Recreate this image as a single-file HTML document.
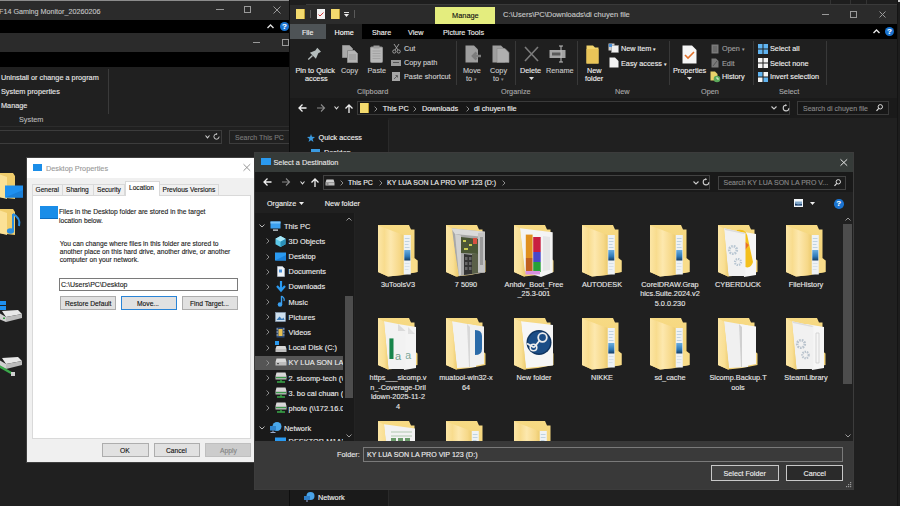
<!DOCTYPE html>
<html><head><meta charset="utf-8">
<style>
*{margin:0;padding:0;box-sizing:border-box}
html,body{width:900px;height:506px;overflow:hidden;background:#202020;font-family:"Liberation Sans",sans-serif;position:relative}
.a{position:absolute}
.gl{color:#ececec;line-height:10px}
.t{position:absolute;white-space:nowrap;font-size:7.3px;line-height:10px;color:#e8e8e8;-webkit-text-stroke:0.12px currentColor;margin-top:0.5px}
svg{position:absolute;overflow:visible}
</style></head><body>

<!-- ===== Window A (left, background) ===== -->
<div class="a" style="left:0;top:0;width:290px;height:506px;background:#202020"></div>
<div class="a" style="left:0;top:0;width:290px;height:1px;background:#8c8c8c"></div>
<div class="a" style="left:0;top:1px;width:290px;height:19px;background:#2b2b2b"></div>
<div class="t" style="left:-1px;top:6px;color:#c4c4c4;font-size:7.2px">F14 Gaming Monitor_20260206</div>
<div class="a" style="left:216px;top:9px;width:8px;height:1px;background:#9a9a9a"></div>
<div class="a" style="left:244px;top:6px;width:7px;height:7px;border:1px solid #9a9a9a"></div>
<svg style="left:273px;top:6px" width="8" height="8"><path d="M0.5 0.5L7.5 7.5M7.5 0.5L0.5 7.5" stroke="#9a9a9a" stroke-width="1"/></svg>
<div class="a" style="left:0;top:20px;width:290px;height:13px;background:#000"></div>
<svg style="left:267px;top:24px" width="7" height="5"><path d="M0.5 4L3.5 1L6.5 4" stroke="#e0e0e0" stroke-width="1.4" fill="none"/></svg>
<div class="a" style="left:280px;top:22px;width:9px;height:9px;border-radius:50%;background:#1a73d0"></div>
<div class="t" style="left:282px;top:21px;font-size:8px;font-weight:bold;color:#fff">?</div>
<div class="a" style="left:0;top:33px;width:290px;height:19px;background:#2b2b2b"></div>
<div class="a" style="left:253px;top:42px;width:7px;height:1px;background:#9a9a9a"></div>
<div class="a" style="left:282px;top:39px;width:7px;height:7px;border:1px solid #9a9a9a"></div>
<div class="a" style="left:0;top:52px;width:290px;height:15px;background:#000"></div>
<div class="a" style="left:0;top:67px;width:290px;height:59px;background:#202020"></div>
<div class="a" style="left:108px;top:69px;width:1px;height:45px;background:#3a3a3a"></div>
<div class="t" style="left:1px;top:72.5px">Uninstall or change a program</div>
<div class="t" style="left:1px;top:86.5px">System properties</div>
<div class="t" style="left:1px;top:100.5px">Manage</div>
<div class="t" style="left:19px;top:114.5px;color:#b8b8b8">System</div>
<div class="a" style="left:0;top:126px;width:290px;height:1px;background:#2c2c2c"></div>
<div class="a" style="left:-2px;top:130px;width:224px;height:14px;border:1px solid #3c3c3c"></div>
<svg style="left:205px;top:135px" width="5" height="4"><path d="M0.5 0.5L2.5 2.8L4.5 0.5" stroke="#ccc" stroke-width="1.1" fill="none"/></svg>
<svg style="left:213px;top:133px" width="7" height="7"><path d="M3.5 1A2.6 2.6 0 1 0 6.1 3.6" stroke="#ccc" stroke-width="1" fill="none"/><path d="M3 0L4.6 1L3 2Z" fill="#ccc"/></svg>
<div class="a" style="left:229px;top:130px;width:62px;height:14px;border:1px solid #3c3c3c"></div>
<div class="t" style="left:235px;top:132px;color:#7a7a7a;font-size:7px">Search This PC</div>
<!-- left icons (window A content) -->
<svg style="left:-1px;top:173px" width="26" height="28"><path d="M0 0H14L16 3V26L0 24Z" fill="#f0cd6c"/><path d="M0 1L8 4V26L0 24Z" fill="#fbe196"/><rect x="6" y="12.5" width="18" height="12" fill="#1e90f0"/><path d="M6 24.5L24 17V24.5Z" fill="#1a7fd8"/></svg>
<svg style="left:-1px;top:209px" width="24" height="28"><path d="M0 0H14L16 3V26L0 24Z" fill="#f0cd6c"/><path d="M0 1L8 4V26L0 24Z" fill="#fbe196"/><path d="M14 5V21" stroke="#2a8ee0" stroke-width="2"/><ellipse cx="11.5" cy="22" rx="3.6" ry="2.8" fill="#2a8ee0"/><path d="M14 5Q22 9 20 17" stroke="#2a8ee0" stroke-width="2" fill="none"/></svg>
<svg style="left:-1px;top:301px" width="26" height="24"><rect x="0" y="0" width="7" height="4" fill="#1e90f0"/><rect x="0" y="5" width="7" height="4" fill="#1e90f0"/><path d="M3 10L19 9L23 13L7 16Z" fill="#e8e8e8"/><path d="M7 16L23 13V17L7 21Z" fill="#bcbcbc"/><path d="M0 12L7 16V21L0 18Z" fill="#d0d0d0"/><rect x="4" y="16.5" width="2" height="1.5" fill="#3aa04a"/></svg>
<svg style="left:-1px;top:356px" width="26" height="22"><path d="M3 2L19 1L23 5L7 8Z" fill="#e8e8e8"/><path d="M7 8L23 5V9L7 13Z" fill="#bcbcbc"/><path d="M0 4L7 8V13L0 10Z" fill="#d0d0d0"/><path d="M0 10L14 18" stroke="#3aa84a" stroke-width="2.5"/><rect x="12" y="16" width="4" height="4" fill="#cfcfcf"/></svg>


<!-- ===== Window B (explorer) ===== -->
<div class="a" style="left:290px;top:0;width:607px;height:506px;background:#202020"></div>
<div class="a" style="left:289px;top:0;width:1px;height:506px;background:#0e0e0e"></div>
<div class="a" style="left:897px;top:0;width:3px;height:506px;background:#1d1d1d"></div>
<div class="a" style="left:897px;top:0;width:1px;height:506px;background:#141414"></div>
<div class="a" style="left:898px;top:0;width:2px;height:2px;background:#cfcfcf"></div>
<div class="a" style="left:290px;top:0;width:607px;height:5px;background:#1e1e1e"></div>
<div class="a" style="left:306px;top:4px;width:591px;height:1px;background:#3a3a3a"></div>
<div class="a" style="left:830px;top:0;width:1px;height:4px;background:#333"></div>
<div class="a" style="left:850px;top:0;width:1px;height:4px;background:#333"></div>
<div class="a" style="left:866px;top:0;width:1px;height:4px;background:#333"></div>
<div class="a" style="left:290px;top:5px;width:607px;height:19px;background:#2b2b2b"></div>
<!-- QAT -->
<div class="a" style="left:296px;top:9px;width:9px;height:10px;background:#f3da6e;border-right:1px solid #b89a30"></div>
<div class="a" style="left:310px;top:10px;width:1px;height:8px;background:#5a5a5a"></div>
<div class="a" style="left:317px;top:9px;width:8px;height:10px;background:#f4f4f4"></div>
<svg style="left:318px;top:12px" width="6" height="5"><path d="M0.5 2.5L2 4L5.5 0.5" stroke="#d23a3a" stroke-width="1" fill="none"/></svg>
<div class="a" style="left:331px;top:9px;width:9px;height:10px;background:#f3da6e;border-right:1px solid #b89a30"></div>
<div class="a" style="left:344px;top:12px;width:5px;height:1px;background:#ddd"></div>
<svg style="left:344px;top:14px" width="5" height="3"><path d="M0 0L5 0L2.5 3Z" fill="#eee"/></svg>
<div class="a" style="left:354px;top:10px;width:1px;height:8px;background:#5a5a5a"></div>
<div class="a" style="left:435px;top:7px;width:60px;height:17px;background:#e4ed7e"></div>
<div class="t" style="left:452px;top:10.5px;color:#111;font-size:7.4px">Manage</div>
<div class="t" style="left:503px;top:9.5px;color:#c8c8c8;font-size:7.5px">C:\Users\PC\Downloads\di chuyen file</div>
<div class="a" style="left:822px;top:14px;width:7px;height:1px;background:#9a9a9a"></div>
<div class="a" style="left:850px;top:11px;width:7px;height:7px;border:1px solid #9a9a9a"></div>
<svg style="left:879px;top:11px" width="7" height="7"><path d="M0.5 0.5L6.5 6.5M6.5 0.5L0.5 6.5" stroke="#9a9a9a" stroke-width="1"/></svg>
<!-- tabs -->
<div class="a" style="left:290px;top:24px;width:607px;height:15px;background:#000"></div>
<div class="a" style="left:290px;top:24px;width:36px;height:15px;background:#4e5356"></div>
<div class="t" style="left:302px;top:27px;color:#f2f2f2;font-size:7px">File</div>
<div class="a" style="left:326px;top:24px;width:36px;height:15px;background:#1f1f1f"></div>
<div class="t" style="left:334.5px;top:27px;color:#fff;font-size:7.2px">Home</div>
<div class="t" style="left:372px;top:27px;color:#f0f0f0;font-size:7.2px">Share</div>
<div class="t" style="left:408px;top:27px;color:#f0f0f0;font-size:7.2px">View</div>
<div class="t" style="left:443px;top:27px;color:#f0f0f0;font-size:7.2px">Picture Tools</div>
<svg style="left:873px;top:29px" width="7" height="5"><path d="M0.5 4L3.5 1L6.5 4" stroke="#e8e8e8" stroke-width="1.4" fill="none"/></svg>
<div class="a" style="left:885px;top:27px;width:9px;height:9px;border-radius:50%;background:#1a73d0"></div>
<div class="t" style="left:887px;top:26.5px;font-size:8px;font-weight:bold;color:#fff">?</div>
<!-- ribbon -->
<div class="a" style="left:290px;top:39px;width:607px;height:59px;background:#1f1f1f"></div>
<div class="a" style="left:290px;top:98px;width:607px;height:1px;background:#262626"></div>
<!-- Clipboard group -->
<svg style="left:304px;top:42px" width="20" height="20"><path d="M4.3 17.6L8.5 13.5" stroke="#b4bcbc" stroke-width="1.4"/><path d="M13.3 5.7L17 9.8L14.3 11.2L11.9 16.7L5.9 10.7L11.3 8.4Z" fill="#b4bcbc"/></svg>
<div class="t" style="left:295.5px;top:65px;color:#f0f0f0">Pin to Quick</div>
<div class="t" style="left:305px;top:73.5px;color:#f0f0f0">access</div>
<svg style="left:342px;top:45px" width="16" height="18"><path d="M0.5 0.5H7.5L10.5 3.5V12.5H0.5Z" fill="#a9a9a9" stroke="#8a8a8a" stroke-width="1"/><path d="M5.5 5.5H12.5L15.5 8.5V17.5H5.5Z" fill="#b4b4b4" stroke="#8a8a8a" stroke-width="1"/><path d="M7 10H14M7 12H14M7 14H14" stroke="#8e8e8e" stroke-width="0.8"/></svg>
<div class="t" style="left:341px;top:65px;color:#c8c8c8">Copy</div>
<svg style="left:370px;top:45px" width="13" height="18"><rect x="0.5" y="2" width="12" height="15.5" rx="1" fill="#b8b8b8" stroke="#8e8e8e"/><rect x="3.5" y="0.5" width="6" height="3" fill="#9c9c9c"/><path d="M2.5 6H10.5M2.5 8.5H10.5M2.5 11H10.5M2.5 13.5H10.5" stroke="#999" stroke-width="0.7"/></svg>
<div class="t" style="left:367.5px;top:65px;color:#c8c8c8">Paste</div>
<svg style="left:392px;top:44px" width="9" height="10"><path d="M2 0L6 6M7 0L3 6" stroke="#a8a8a8" stroke-width="0.9"/><circle cx="2.3" cy="7.5" r="1.6" stroke="#a8a8a8" stroke-width="0.9" fill="none"/><circle cx="6.7" cy="7.5" r="1.6" stroke="#a8a8a8" stroke-width="0.9" fill="none"/></svg>
<div class="t" style="left:404px;top:43.8px;color:#d0d0d0">Cut</div>
<div class="a" style="left:391px;top:59.5px;width:10px;height:6.5px;background:#9c9c9c"></div>
<div class="a" style="left:393px;top:62px;width:6px;height:1px;background:#555"></div>
<div class="t" style="left:404px;top:57.8px;color:#d0d0d0">Copy path</div>
<div class="a" style="left:392px;top:72px;width:7.5px;height:9px;background:#a6a6a6"></div>
<svg style="left:393px;top:74px" width="6" height="6"><path d="M1 5L4 2M2.5 1.5H4.5V3.5" stroke="#555" stroke-width="0.9" fill="none"/></svg>
<div class="t" style="left:404px;top:71.6px;color:#d0d0d0">Paste shortcut</div>
<div class="t" style="left:357px;top:86.5px;color:#a8a8a8">Clipboard</div>
<div class="a" style="left:456px;top:41px;width:1px;height:44px;background:#383838"></div>
<!-- Organize group -->
<svg style="left:465px;top:45px" width="17" height="19"><path d="M0.5 0.5H9L13 4.5V17.5H0.5Z" fill="#9e9e9e"/><path d="M16 11H9M11.5 7.5L8 11L11.5 14.5" stroke="#7c7c7c" stroke-width="2.6" fill="none"/></svg>
<div class="t" style="left:463px;top:65.5px;color:#c8c8c8">Move</div>
<div class="t" style="left:466px;top:73.5px;color:#c8c8c8">to <span style="font-size:5px;color:#888">&#9662;</span></div>
<svg style="left:492px;top:45px" width="18" height="19"><path d="M0.5 0.5H9L13 4.5V17.5H0.5Z" fill="#9e9e9e"/><path d="M5 3.5H13L17 7.5V17.5H5Z" fill="#b0b0b0" stroke="#8a8a8a" stroke-width="0.6"/></svg>
<div class="t" style="left:490px;top:65.5px;color:#c8c8c8">Copy</div>
<div class="t" style="left:493px;top:73.5px;color:#c8c8c8">to <span style="font-size:5px;color:#888">&#9662;</span></div>
<div class="a" style="left:515px;top:41px;width:1px;height:44px;background:#383838"></div>
<svg style="left:524px;top:46px" width="15" height="16"><path d="M1 1L14 15M14 1L1 15" stroke="#7b7b7b" stroke-width="1.6"/></svg>
<div class="t" style="left:520px;top:65.5px;color:#eaeaea">Delete</div>
<svg style="left:529px;top:77px" width="5" height="3"><path d="M0 0L5 0L2.5 3Z" fill="#ddd"/></svg>
<svg style="left:549px;top:45px" width="19" height="18"><rect x="0.5" y="5" width="16" height="8" fill="#a4a4a4"/><rect x="3" y="7.5" width="9" height="3" fill="#5a5a5a"/><path d="M12 1V17M10 1H14M10 17H14" stroke="#c0c0c0" stroke-width="1"/></svg>
<div class="t" style="left:546px;top:65.5px;color:#c8c8c8">Rename</div>
<div class="t" style="left:501px;top:86.5px;color:#a8a8a8">Organize</div>
<div class="a" style="left:577px;top:41px;width:1px;height:44px;background:#383838"></div>
<!-- New group -->
<svg style="left:586px;top:45px" width="13" height="19"><path d="M0.5 0.5H7L9 2.5H12.5V18.5H0.5Z" fill="#f2d46c"/><path d="M0.5 4H12.5V18.5H0.5Z" fill="#e9c458"/></svg>
<div class="t" style="left:587px;top:65.5px;color:#f0f0f0">New</div>
<div class="t" style="left:585px;top:73.7px;color:#f0f0f0">folder</div>
<svg style="left:608px;top:43px" width="12" height="10"><rect x="0.5" y="0.5" width="6" height="7" fill="#cfcfcf"/><rect x="3.5" y="2.5" width="7" height="7" fill="#f0f0f0" stroke="#9a9a9a" stroke-width="0.6"/><rect x="1" y="1" width="3" height="3" fill="#4a90d9"/></svg>
<div class="t" style="left:621px;top:43.9px;color:#f0f0f0">New item <span style="font-size:5px">&#9662;</span></div>
<svg style="left:609px;top:57px" width="10" height="11"><path d="M0.5 0.5H6L9.5 4V10.5H0.5Z" fill="#f2f2f2"/></svg>
<div class="t" style="left:621px;top:58px;color:#f0f0f0">Easy access <span style="font-size:5px">&#9662;</span></div>
<div class="t" style="left:615px;top:86.5px;color:#a8a8a8">New</div>
<div class="a" style="left:669px;top:41px;width:1px;height:44px;background:#383838"></div>
<!-- Open group -->
<svg style="left:682px;top:45px" width="15" height="19"><path d="M0.5 0.5H10L14.5 5V18.5H0.5Z" fill="#f6f6f6"/><path d="M3 10L6 13L12 7" stroke="#e0702a" stroke-width="1.6" fill="none"/></svg>
<div class="t" style="left:673px;top:65.5px;color:#f0f0f0">Properties</div>
<svg style="left:687px;top:77px" width="5" height="3"><path d="M0 0L5 0L2.5 3Z" fill="#ddd"/></svg>
<svg style="left:711px;top:44px" width="8" height="10"><path d="M0.5 0.5H7.5V9.5H0.5Z" fill="#7a7a7a"/><path d="M2 3H6M2 5H6M2 7H6" stroke="#555" stroke-width="0.8"/></svg>
<div class="t" style="left:722px;top:43.9px;color:#a0a0a0">Open <span style="font-size:5px">&#9662;</span></div>
<svg style="left:711px;top:58px" width="8" height="10"><path d="M0.5 0.5H5L7.5 3V9.5H0.5Z" fill="#7a7a7a"/><path d="M2 8L6 3" stroke="#555" stroke-width="1"/></svg>
<div class="t" style="left:722px;top:58px;color:#a0a0a0">Edit</div>
<svg style="left:710px;top:71px" width="11" height="12"><path d="M0.5 0.5H5L7.5 3V9.5H0.5Z" fill="#e8d26a"/><circle cx="7" cy="8" r="3.3" fill="#5aa85a"/><path d="M7 6V8H9" stroke="#fff" stroke-width="0.8" fill="none"/></svg>
<div class="t" style="left:722px;top:71.7px;color:#f0f0f0">History</div>
<div class="t" style="left:701px;top:86.5px;color:#a8a8a8">Open</div>
<div class="a" style="left:753px;top:41px;width:1px;height:44px;background:#383838"></div>
<!-- Select group -->
<svg style="left:758px;top:44px" width="10" height="10"><rect x="0" y="0" width="4.5" height="4.5" fill="#5fb3f0"/><rect x="5.5" y="0" width="4.5" height="4.5" fill="#5fb3f0"/><rect x="0" y="5.5" width="4.5" height="4.5" fill="#5fb3f0"/><rect x="5.5" y="5.5" width="4.5" height="4.5" fill="#5fb3f0"/></svg>
<div class="t" style="left:770px;top:43.7px;color:#f0f0f0">Select all</div>
<svg style="left:758px;top:58px" width="10" height="10"><rect x="0" y="0" width="4.5" height="4.5" fill="#f4f4f4"/><rect x="5.5" y="0" width="4.5" height="4.5" fill="#f4f4f4"/><rect x="0" y="5.5" width="4.5" height="4.5" fill="#f4f4f4"/><rect x="5.5" y="5.5" width="4.5" height="4.5" fill="#f4f4f4"/></svg>
<div class="t" style="left:770px;top:58px;color:#f0f0f0">Select none</div>
<svg style="left:758px;top:72px" width="10" height="10"><rect x="0" y="0" width="4.5" height="4.5" fill="#5fb3f0"/><rect x="5.5" y="0" width="4.5" height="4.5" fill="#f4f4f4"/><rect x="0" y="5.5" width="4.5" height="4.5" fill="#f4f4f4"/><rect x="5.5" y="5.5" width="4.5" height="4.5" fill="#5fb3f0"/></svg>
<div class="t" style="left:770px;top:71.7px;color:#f0f0f0">Invert selection</div>
<div class="t" style="left:779px;top:86.5px;color:#a8a8a8">Select</div>
<div class="a" style="left:826px;top:41px;width:1px;height:44px;background:#383838"></div>
<!-- address row -->
<div class="a" style="left:290px;top:98px;width:607px;height:20px;background:#1a1a1a"></div>
<svg style="left:298px;top:104px" width="9" height="8"><path d="M8.5 4H1M4.5 0.5L1 4L4.5 7.5" stroke="#f0f0f0" stroke-width="1.3" fill="none"/></svg>
<svg style="left:317px;top:104px" width="9" height="8"><path d="M0 4H7.5M4 0.5L7.5 4L4 7.5" stroke="#8a8a8a" stroke-width="1.1" fill="none"/></svg>
<svg style="left:334px;top:106px" width="5" height="4"><path d="M0.5 0.5L2.5 2.8L4.5 0.5" stroke="#ddd" stroke-width="1.1" fill="none"/></svg>
<svg style="left:345px;top:104px" width="8" height="9"><path d="M4 9V1.2M0.5 4.5L4 1L7.5 4.5" stroke="#f0f0f0" stroke-width="1.3" fill="none"/></svg>
<div class="a" style="left:357px;top:101px;width:433px;height:14px;border:1px solid #3a3a3a;background:#171717"></div>
<div class="a" style="left:360px;top:103px;width:9px;height:10px;background:#f3da6e;border-right:1px solid #b89a30"></div>
<svg style="left:373.5px;top:105.5px" width="4" height="6"><path d="M0.6 0.6L3 3L0.6 5.4" stroke="#9a9a9a" stroke-width="0.9" fill="none"/></svg>
<div class="t" style="left:382.8px;top:103px;color:#f0f0f0">This PC</div>
<svg style="left:412.5px;top:105.5px" width="4" height="6"><path d="M0.6 0.6L3 3L0.6 5.4" stroke="#9a9a9a" stroke-width="0.9" fill="none"/></svg>
<div class="t" style="left:422px;top:103px;color:#f0f0f0">Downloads</div>
<svg style="left:465.5px;top:105.5px" width="4" height="6"><path d="M0.6 0.6L3 3L0.6 5.4" stroke="#9a9a9a" stroke-width="0.9" fill="none"/></svg>
<div class="t" style="left:474px;top:103px;color:#f0f0f0">di chuyen file</div>
<svg style="left:771px;top:106px" width="6" height="4"><path d="M0.5 0.5L3 3L5.5 0.5" stroke="#ccc" stroke-width="1.1" fill="none"/></svg>
<svg style="left:782px;top:104px" width="8" height="8"><path d="M4 1.3A2.8 2.8 0 1 0 6.8 4.2" stroke="#ccc" stroke-width="1.1" fill="none"/><path d="M3.3 0L5.2 1.3L3.3 2.6Z" fill="#ccc"/></svg>
<div class="a" style="left:797px;top:101px;width:92px;height:14px;border:1px solid #3a3a3a;background:#171717"></div>
<div class="t" style="left:803px;top:103px;color:#8a8a8a;font-size:7px">Search di chuyen file</div>
<svg style="left:876px;top:104px" width="7" height="8"><circle cx="4.3" cy="2.8" r="2.2" stroke="#ddd" stroke-width="1" fill="none"/><path d="M2.8 4.3L0.5 6.8" stroke="#ddd" stroke-width="1.2"/></svg>
<!-- nav pane (behind) -->
<div class="a" style="left:290px;top:118px;width:98px;height:388px;background:#1a1a1a"></div>
<div class="a" style="left:388px;top:120px;width:1px;height:386px;background:#2a2a2a"></div>
<svg style="left:307px;top:134px" width="8" height="8"><path d="M4 0L5 2.8L8 3L5.6 4.9L6.5 8L4 6.2L1.5 8L2.4 4.9L0 3L3 2.8Z" fill="#3a9ae0"/></svg>
<div class="t" style="left:318.6px;top:132.5px;color:#f0f0f0">Quick access</div>
<div class="a" style="left:311px;top:149px;width:9px;height:6px;background:#3a9ae0"></div>
<div class="t" style="left:324px;top:147px;color:#f0f0f0">Desktop</div>
<svg style="left:304px;top:492px" width="11" height="10"><circle cx="6.5" cy="4" r="4" fill="#4aa3e8"/><rect x="0" y="4" width="6" height="4" fill="#2f7fc8"/><path d="M3 8V10" stroke="#9ad" stroke-width="1"/></svg>
<div class="t" style="left:318px;top:492px;color:#f0f0f0">Network</div>


<!-- ===== Desktop Properties dialog ===== -->
<div class="a" style="left:26px;top:157px;width:230px;height:306px;background:#f0f0f0;border:1px solid #3f3f3f"></div>
<div class="a" style="left:27px;top:158px;width:228px;height:20px;background:#fff"></div>
<div class="a" style="left:33px;top:164px;width:9px;height:6.5px;background:#1a8de8"></div>
<div class="t" style="left:46px;top:163px;color:#9a9a9a;font-size:7.3px">Desktop Properties</div>
<svg style="left:243px;top:164px" width="8" height="7"><path d="M0.5 0.2L7.2 6.8M7.2 0.2L0.5 6.8" stroke="#8a8a8a" stroke-width="0.9"/></svg>
<!-- tabs -->
<div class="a" style="left:32px;top:183.5px;width:31px;height:11px;border:1px solid #d9d9d9;border-bottom:none;background:#f0f0f0"></div>
<div class="t" style="left:35.5px;top:184.5px;color:#111;font-size:6.6px">General</div>
<div class="a" style="left:62px;top:183.5px;width:32px;height:11px;border:1px solid #d9d9d9;border-bottom:none;background:#f0f0f0"></div>
<div class="t" style="left:66px;top:184.5px;color:#111;font-size:6.6px">Sharing</div>
<div class="a" style="left:93px;top:183.5px;width:32px;height:11px;border:1px solid #d9d9d9;border-bottom:none;background:#f0f0f0"></div>
<div class="t" style="left:97px;top:184.5px;color:#111;font-size:6.6px">Security</div>
<div class="a" style="left:159px;top:183.5px;width:60px;height:11px;border:1px solid #d9d9d9;border-bottom:none;background:#f0f0f0"></div>
<div class="t" style="left:162.5px;top:184.5px;color:#111;font-size:6.6px">Previous Versions</div>
<div class="a" style="left:31.5px;top:194.5px;width:219.5px;height:244.5px;background:#fff;border:1px solid #d9d9d9"></div>
<div class="a" style="left:124.5px;top:181px;width:35px;height:15px;background:#fff;border:1px solid #d9d9d9;border-bottom:none"></div>
<div class="t" style="left:129px;top:182.5px;color:#111;font-size:6.6px">Location</div>
<!-- panel content -->
<div class="a" style="left:40px;top:206px;width:18px;height:13px;background:#1a8de8;border-bottom:1px solid #0d6cc0"></div>
<div class="t" style="left:59px;top:206px;color:#1a1a1a;font-size:6.7px;line-height:9px">Files in the Desktop folder are stored in the target<br>location below.</div>
<div class="t" style="left:59.7px;top:239.5px;color:#1a1a1a;font-size:6.7px;line-height:8px">You can change where files in this folder are stored to<br>another place on this hard drive, another drive, or another<br>computer on your network.</div>
<div class="a" style="left:59px;top:278px;width:179px;height:12.5px;border:1px solid #7a7a7a;background:#fff"></div>
<div class="t" style="left:61px;top:279.5px;color:#1a1a1a;font-size:7px">C:\Users\PC\Desktop</div>
<div class="a" style="left:60px;top:296px;width:56px;height:13.5px;border:1px solid #adadad;background:#e1e1e1"></div>
<div class="t" style="left:65px;top:298px;color:#111;font-size:6.7px">Restore Default</div>
<div class="a" style="left:121px;top:296px;width:56px;height:13.5px;border:1.5px solid #2a84d6;background:#e1e1e1"></div>
<div class="t" style="left:137px;top:298px;color:#111;font-size:6.7px">Move...</div>
<div class="a" style="left:182px;top:296px;width:56px;height:13.5px;border:1px solid #adadad;background:#e1e1e1"></div>
<div class="t" style="left:190px;top:298px;color:#111;font-size:6.7px">Find Target...</div>
<!-- bottom buttons -->
<div class="a" style="left:102px;top:443px;width:46.5px;height:13.5px;border:1px solid #adadad;background:#e1e1e1"></div>
<div class="t" style="left:120px;top:445px;color:#111;font-size:6.7px">OK</div>
<div class="a" style="left:154px;top:443px;width:46px;height:13.5px;border:1px solid #adadad;background:#e1e1e1"></div>
<div class="t" style="left:166px;top:445px;color:#111;font-size:6.7px">Cancel</div>
<div class="a" style="left:205px;top:443px;width:46px;height:13.5px;border:1px solid #bfbfbf;background:#cccccc"></div>
<div class="t" style="left:220px;top:445px;color:#838383;font-size:6.7px">Apply</div>

<!-- ===== Select a Destination dialog ===== -->
<div class="a" style="left:254px;top:152px;width:600px;height:338px;background:#202020;border:1px solid #3c3c3c"></div>
<div class="a" style="left:255px;top:171px;width:598px;height:21px;background:#191919"></div>
<div class="a" style="left:255px;top:213px;width:100px;height:228px;background:#1a1a1a"></div>
<div class="a" style="left:255px;top:153px;width:598px;height:18.5px;background:#363b39"></div>
<div class="a" style="left:261px;top:158px;width:9.5px;height:6.5px;background:#2a9af0"></div>
<div class="t" style="left:273.5px;top:157px;color:#e6e6e6;font-size:7.3px">Select a Destination</div>
<svg style="left:840px;top:158.5px" width="8" height="7"><path d="M0.5 0.3L7.2 6.7M7.2 0.3L0.5 6.7" stroke="#e8e8e8" stroke-width="1"/></svg>
<!-- nav row -->
<svg style="left:263px;top:178px" width="9" height="8"><path d="M8.5 4H1M4.5 0.5L1 4L4.5 7.5" stroke="#f0f0f0" stroke-width="1.3" fill="none"/></svg>
<svg style="left:282px;top:178px" width="9" height="8"><path d="M0 4H7.5M4 0.5L7.5 4L4 7.5" stroke="#8a8a8a" stroke-width="1.1" fill="none"/></svg>
<svg style="left:299.5px;top:180.5px" width="5" height="4"><path d="M0.5 0.5L2.5 2.8L4.5 0.5" stroke="#ddd" stroke-width="1.1" fill="none"/></svg>
<svg style="left:310.5px;top:178px" width="8" height="9"><path d="M4 9V1.2M0.5 4.5L4 1L7.5 4.5" stroke="#f0f0f0" stroke-width="1.3" fill="none"/></svg>
<div class="a" style="left:322.5px;top:175px;width:387.5px;height:14.5px;border:1px solid #424242;background:#1b1b1b"></div>
<svg style="left:325px;top:179px" width="10" height="7"><path d="M1.5 0.5H8.5L9.5 3.5H0.5Z" fill="#cfcfcf"/><rect x="0.5" y="3.5" width="9" height="3" fill="#bdbdbd"/><rect x="1.5" y="4.5" width="2" height="1" fill="#555"/></svg>
<svg style="left:339.5px;top:180.0px" width="4" height="6"><path d="M0.6 0.6L3 3L0.6 5.4" stroke="#9a9a9a" stroke-width="0.9" fill="none"/></svg>
<div class="t" style="left:348px;top:177.3px;color:#f0f0f0;font-size:7px">This PC</div>
<svg style="left:378.5px;top:180.0px" width="4" height="6"><path d="M0.6 0.6L3 3L0.6 5.4" stroke="#9a9a9a" stroke-width="0.9" fill="none"/></svg>
<div class="t" style="left:387px;top:177.3px;color:#f0f0f0;font-size:7px">KY LUA SON LA PRO VIP 123 (D:)</div>
<svg style="left:501.5px;top:180.0px" width="4" height="6"><path d="M0.6 0.6L3 3L0.6 5.4" stroke="#9a9a9a" stroke-width="0.9" fill="none"/></svg>
<svg style="left:693px;top:181px" width="6" height="4"><path d="M0.5 0.5L3 3L5.5 0.5" stroke="#ccc" stroke-width="1.1" fill="none"/></svg>
<svg style="left:702px;top:178px" width="8" height="8"><path d="M4 1.3A2.8 2.8 0 1 0 6.8 4.2" stroke="#ccc" stroke-width="1.1" fill="none"/><path d="M3.3 0L5.2 1.3L3.3 2.6Z" fill="#ccc"/></svg>
<div class="a" style="left:717.5px;top:175.5px;width:128.5px;height:14px;border:1px solid #424242;background:#1b1b1b"></div>
<div class="t" style="left:723.5px;top:177.5px;color:#8a8a8a;font-size:7px">Search KY LUA SON LA PRO V...</div>
<svg style="left:834px;top:179px" width="7" height="8"><circle cx="4.3" cy="2.8" r="2.2" stroke="#ddd" stroke-width="1" fill="none"/><path d="M2.8 4.3L0.5 6.8" stroke="#ddd" stroke-width="1.2"/></svg>
<!-- command bar -->
<div class="t" style="left:267px;top:198px;color:#f0f0f0;font-size:7.2px">Organize</div>
<svg style="left:298.5px;top:202px" width="5" height="3"><path d="M0 0L5 0L2.5 3Z" fill="#eee"/></svg>
<div class="t" style="left:324.7px;top:198.3px;color:#f0f0f0;font-size:7.4px">New folder</div>
<svg style="left:794px;top:199px" width="9" height="8"><rect x="0" y="0" width="9" height="8" fill="#f4f7fa"/><path d="M1 2.5H8V6.5H1Z" fill="#7fa6c8"/><path d="M1 6.5L1 4.5L4 5.5L8 5V6.5Z" fill="#1f3f6a"/></svg>
<svg style="left:810px;top:202px" width="5" height="3"><path d="M0 0L5 0L2.5 3Z" fill="#eee"/></svg>
<div class="a" style="left:834px;top:199px;width:9.5px;height:9.5px;border-radius:50%;background:#1a73d0"></div>
<div class="t" style="left:836.3px;top:198.5px;font-size:8px;font-weight:bold;color:#fff">?</div>
<!-- nav pane -->
<div class="a" style="left:255px;top:213px;width:88px;height:228px;overflow:hidden"><div class="a" style="left:-255px;top:-213px;width:900px;height:506px">
<!--NAV-->
<svg style="left:259px;top:224px" width="6" height="4"><path d="M0.5 0.6L3 3L5.5 0.6" stroke="#bdbdbd" stroke-width="1" fill="none"/></svg>
<svg style="left:270px;top:221px" width="11" height="10"><rect x="0.5" y="0.5" width="10" height="7" fill="#3aa0f0"/><rect x="0.5" y="0.5" width="10" height="2" fill="#7cc4f8"/><rect x="3" y="8.5" width="5" height="1.2" fill="#dfe8f0"/></svg>
<div class="t" style="left:284px;top:221px;color:#ececec;font-size:7.4px">This PC</div>
<svg style="left:266px;top:238px" width="4" height="6"><path d="M0.6 0.5L3 3L0.6 5.5" stroke="#9a9a9a" stroke-width="0.9" fill="none"/></svg>
<svg style="left:275px;top:236px" width="11" height="11"><path d="M5.5 0L10.5 2.8V8.2L5.5 11L0.5 8.2V2.8Z" fill="#5cc8e8"/><path d="M5.5 5.5L10.5 2.8V8.2L5.5 11Z" fill="#2a90b8"/><path d="M5.5 5.5L0.5 2.8L5.5 0L10.5 2.8Z" fill="#a8e8f8"/></svg>
<div class="t" style="left:288.6px;top:236px;color:#ececec;font-size:7.4px">3D Objects</div>
<svg style="left:266px;top:253.5px" width="4" height="6"><path d="M0.6 0.5L3 3L0.6 5.5" stroke="#9a9a9a" stroke-width="0.9" fill="none"/></svg>
<svg style="left:275px;top:252px" width="11" height="9"><rect x="0" y="0.5" width="11" height="8" fill="#2a9af0"/><path d="M0 8.5L11 3V8.5Z" fill="#1a80d8"/></svg>
<div class="t" style="left:288.6px;top:251.5px;color:#ececec;font-size:7.4px">Desktop</div>
<svg style="left:266px;top:268.7px" width="4" height="6"><path d="M0.6 0.5L3 3L0.6 5.5" stroke="#9a9a9a" stroke-width="0.9" fill="none"/></svg>
<svg style="left:277px;top:266px" width="8" height="11"><path d="M0.5 0.5H5.5L7.5 2.5V10.5H0.5Z" fill="#f0f4f8" stroke="#b8c8d8" stroke-width="0.6"/><rect x="2" y="3.5" width="3" height="3" fill="#4a90d9"/></svg>
<div class="t" style="left:288.6px;top:266.7px;color:#ececec;font-size:7.4px">Documents</div>
<svg style="left:266px;top:283.9px" width="4" height="6"><path d="M0.6 0.5L3 3L0.6 5.5" stroke="#9a9a9a" stroke-width="0.9" fill="none"/></svg>
<svg style="left:276px;top:281px" width="10" height="11"><path d="M5 0V9M1 5L5 9.5L9 5" stroke="#2a9af0" stroke-width="2.2" fill="none"/></svg>
<div class="t" style="left:288.6px;top:281.9px;color:#ececec;font-size:7.4px">Downloads</div>
<svg style="left:266px;top:299px" width="4" height="6"><path d="M0.6 0.5L3 3L0.6 5.5" stroke="#9a9a9a" stroke-width="0.9" fill="none"/></svg>
<svg style="left:277px;top:296px" width="9" height="11"><path d="M4.5 0V8" stroke="#3aa0f0" stroke-width="1.4"/><circle cx="3" cy="8.5" r="2.3" fill="#3aa0f0"/><path d="M4.5 0Q8 2 7 5" stroke="#3aa0f0" stroke-width="1.2" fill="none"/></svg>
<div class="t" style="left:288.6px;top:297px;color:#ececec;font-size:7.4px">Music</div>
<svg style="left:266px;top:314px" width="4" height="6"><path d="M0.6 0.5L3 3L0.6 5.5" stroke="#9a9a9a" stroke-width="0.9" fill="none"/></svg>
<svg style="left:275px;top:312px" width="11" height="10"><rect x="0.5" y="0.5" width="10" height="9" fill="#cfe0ee" stroke="#8aa0b8" stroke-width="0.6"/><path d="M1.5 8L4.5 4.5L7 7L8.5 5.5L9.5 8Z" fill="#3a7ab8"/></svg>
<div class="t" style="left:288.6px;top:312px;color:#ececec;font-size:7.4px">Pictures</div>
<svg style="left:266px;top:329px" width="4" height="6"><path d="M0.6 0.5L3 3L0.6 5.5" stroke="#9a9a9a" stroke-width="0.9" fill="none"/></svg>
<svg style="left:276px;top:327px" width="9" height="11"><rect x="0.5" y="0.5" width="8" height="10" fill="#2a4a78"/><rect x="2.5" y="2" width="4" height="7" fill="#e8c050"/><path d="M0.5 2H2M0.5 5H2M0.5 8H2M7 2H8.5M7 5H8.5M7 8H8.5" stroke="#ddd" stroke-width="0.8"/></svg>
<div class="t" style="left:288.6px;top:327px;color:#ececec;font-size:7.4px">Videos</div>
<svg style="left:266px;top:344.5px" width="4" height="6"><path d="M0.6 0.5L3 3L0.6 5.5" stroke="#9a9a9a" stroke-width="0.9" fill="none"/></svg>
<svg style="left:275px;top:341px" width="12" height="11"><rect x="0" y="0" width="4" height="4" fill="#2a9af0"/><path d="M1.5 5H10.5L11.5 8H0.5Z" fill="#d8d8d8"/><rect x="0.5" y="8" width="11" height="3" fill="#bfbfbf"/></svg>
<div class="t" style="left:288.6px;top:342.5px;color:#ececec;font-size:7.4px">Local Disk (C:)</div>
<div class="a" style="left:255px;top:355.5px;width:88px;height:14.5px;background:#555555"></div>
<svg style="left:266px;top:359.5px" width="4" height="6"><path d="M0.6 0.5L3 3L0.6 5.5" stroke="#9a9a9a" stroke-width="0.9" fill="none"/></svg>
<svg style="left:275px;top:358px" width="12" height="8"><path d="M1.5 0.5H10.5L11.5 4H0.5Z" fill="#d8d8d8"/><rect x="0.5" y="4" width="11" height="3.5" fill="#bdbdbd"/><rect x="2" y="5" width="2" height="1.2" fill="#555"/></svg>
<div class="t" style="left:288.6px;top:357.5px;color:#ececec;font-size:7.4px">KY LUA SON LA PRO VIP 123 (D:)</div>
<svg style="left:266px;top:375px" width="4" height="6"><path d="M0.6 0.5L3 3L0.6 5.5" stroke="#9a9a9a" stroke-width="0.9" fill="none"/></svg>
<svg style="left:275px;top:372px" width="12" height="11"><path d="M1.5 0.5H10.5L11.5 4H0.5Z" fill="#d8d8d8"/><rect x="0.5" y="4" width="11" height="3.5" fill="#bdbdbd"/><rect x="1" y="5" width="10" height="1.2" fill="#3a9a4a"/><path d="M6 7.5V10M2 10H10" stroke="#3aaa4a" stroke-width="1.3"/></svg>
<div class="t" style="left:288.6px;top:373px;color:#ececec;font-size:7.4px">2. sicomp-tech (\\172.16.0.5)</div>
<svg style="left:266px;top:390px" width="4" height="6"><path d="M0.6 0.5L3 3L0.6 5.5" stroke="#9a9a9a" stroke-width="0.9" fill="none"/></svg>
<svg style="left:275px;top:387px" width="12" height="11"><path d="M1.5 0.5H10.5L11.5 4H0.5Z" fill="#d8d8d8"/><rect x="0.5" y="4" width="11" height="3.5" fill="#bdbdbd"/><rect x="1" y="5" width="10" height="1.2" fill="#3a9a4a"/><path d="M6 7.5V10M2 10H10" stroke="#3aaa4a" stroke-width="1.3"/></svg>
<div class="t" style="left:288.6px;top:388px;color:#ececec;font-size:7.4px">3. bo cai chuan (\\172.16.0.5)</div>
<svg style="left:266px;top:405px" width="4" height="6"><path d="M0.6 0.5L3 3L0.6 5.5" stroke="#9a9a9a" stroke-width="0.9" fill="none"/></svg>
<svg style="left:275px;top:402px" width="12" height="11"><path d="M1.5 0.5H10.5L11.5 4H0.5Z" fill="#d8d8d8"/><rect x="0.5" y="4" width="11" height="3.5" fill="#bdbdbd"/><rect x="1" y="5" width="10" height="1.2" fill="#3a9a4a"/><path d="M6 7.5V10M2 10H10" stroke="#3aaa4a" stroke-width="1.3"/></svg>
<div class="t" style="left:288.6px;top:403px;color:#ececec;font-size:7.4px">photo (\\172.16.0.5)</div>
<svg style="left:259px;top:426px" width="6" height="4"><path d="M0.5 0.6L3 3L5.5 0.6" stroke="#bdbdbd" stroke-width="1" fill="none"/></svg>
<svg style="left:270px;top:422px" width="12" height="11"><circle cx="7" cy="4.5" r="4.5" fill="#4aa8ec"/><rect x="0" y="4" width="6" height="4.5" fill="#2f84cc"/><path d="M3 8.5V11M0.5 10.5H5.5" stroke="#9ac" stroke-width="1"/></svg>
<div class="t" style="left:284px;top:423px;color:#ececec;font-size:7.4px">Network</div>
<svg style="left:275px;top:436.5px" width="11" height="8"><rect x="0" y="0.5" width="11" height="8" fill="#2a9af0"/></svg>
<div class="t" style="left:288.6px;top:436.5px;color:#ececec;font-size:7.4px">DESKTOP-M1A2B3C</div>
<!--/NAV-->
</div></div>
<div class="a" style="left:355px;top:213px;width:488px;height:228px;overflow:hidden"><div class="a" style="left:-355px;top:-213px;width:900px;height:506px">
<!--GRID-->
<svg width="0" height="0" style="position:absolute"><defs>
<linearGradient id="gf" x1="0" y1="0" x2="1" y2="0"><stop offset="0" stop-color="#fce6a6"/><stop offset="0.25" stop-color="#f8dc8e"/><stop offset="0.5" stop-color="#fde8ae"/><stop offset="0.85" stop-color="#f6d888"/><stop offset="1" stop-color="#eccb70"/></linearGradient>
<linearGradient id="gf2" x1="0" y1="0" x2="1" y2="0"><stop offset="0" stop-color="#fce6a6"/><stop offset="0.6" stop-color="#f9df94"/><stop offset="1" stop-color="#eccb70"/></linearGradient>
<linearGradient id="gp" x1="0" y1="0" x2="0" y2="1"><stop offset="0" stop-color="#6aaee0"/><stop offset="0.6" stop-color="#2f7ab8"/><stop offset="1" stop-color="#143c62"/></linearGradient>
<linearGradient id="gb" x1="0" y1="0" x2="0" y2="1"><stop offset="0" stop-color="#f7da84"/><stop offset="1" stop-color="#f1d074"/></linearGradient>
</defs></svg>
<svg style="left:377px;top:224px" width="44" height="56" viewBox="-1 -1 44 56"><path d="M0 0H31L33 4.5H36.5V33L39.5 35.5V47L24 50L10 51.5L0 47Z" fill="url(#gb)"/><path d="M25.5 10H32.8V49.5H25.5Z" fill="#eef2f5"/><path d="M26.8 13.5H31.5M26.8 16.5H31.5M26.8 19.5H30.5M26.8 22.5H31.5" stroke="#b4cadc" stroke-width="0.8"/><path d="M26.3 25H32.3V35.5H26.3Z" fill="url(#gp)"/><path d="M26.8 38.5H31.5M26.8 41.5H31.5M26.8 44.5H30.5" stroke="#d0dce6" stroke-width="0.8"/><path d="M33 32.5L39.5 35.5V47L33 48Z" fill="#f8dc8a"/><path d="M0 0.4L25.5 10V50L10 51.5L0 47Z" fill="url(#gf)"/></svg>
<div class="t gl" style="left:338px;width:120px;text-align:center;top:279.0px">3uToolsV3</div>
<svg style="left:445px;top:224px" width="44" height="56" viewBox="-1 -1 44 56"><path d="M0 0H31L33 4.5H36.5V33L39.5 35.5V47L24 50L10 51.5L0 47Z" fill="url(#gb)"/><path d="M5 3.3L39 6.7V47.5L13 51Z" fill="#a8a8a8"/><path d="M5 3.3L39 6.7V12L9 9Z" fill="#dadada"/><path d="M9 9L15 10.5V50L13 51Z" fill="#d0d0d0"/><path d="M15 12L32 14V29L15 28Z" fill="#4a5636"/><path d="M17 15h3v2h-3zM23 19h3v2h-3zM18 23h4v2h-4z" fill="#c8cc50"/><path d="M27 13L31 13V19L27 19Z" fill="#d85040"/><path d="M18 29L26 30V49L18 50Z" fill="#333"/><path d="M19 32h2.5v3h-2.5zM23 32h2.5v3h-2.5zM19 37h2.5v3h-2.5zM23 37h2.5v3h-2.5zM19 42h2.5v3h-2.5zM23 42h2.5v3h-2.5z" fill="#666"/><path d="M26 29L32 29V48L26 49Z" fill="#5a6048"/><path d="M32 8L39 7V47.5L32 47Z" fill="#c4c4c4"/><path d="M34 12H37V40H34Z" fill="#9a9a9a"/><path d="M0 0.4L6 3.6L12 51.5L10 51.5L0 47Z" fill="url(#gf2)"/></svg>
<div class="t gl" style="left:406px;width:120px;text-align:center;top:279.0px">7 5090</div>
<svg style="left:513px;top:224px" width="44" height="56" viewBox="-1 -1 44 56"><path d="M0 0H31L33 4.5H36.5V33L39.5 35.5V47L24 50L10 51.5L0 47Z" fill="url(#gb)"/><path d="M6 3.3L38.7 7.3V47.5L27 52L11 47Z" fill="#f4f4f4"/><path d="M11.8 9.6H18.6V33H11.8Z" fill="#e0901e"/><path d="M19.2 12H26.7V27H19.2Z" fill="#c81e40"/><path d="M19.2 27H26.7V37H19.2Z" fill="#4848c8"/><path d="M19.2 37H26.7V47H19.2Z" fill="#28a038"/><path d="M11.8 33H18.6V47H11.8Z" fill="#c06020"/><path d="M11.5 46H26V49.5H11.5Z" fill="#d890e0"/><path d="M29 11L36 12V45L29 46Z" fill="#e6e6e6"/><path d="M0 0.4L6 3.6L11 51.5L10 51.5L0 47Z" fill="url(#gf2)"/></svg>
<div class="t gl" style="left:474px;width:120px;text-align:center;top:279.0px">Anhdv_Boot_Free</div>
<div class="t gl" style="left:474px;width:120px;text-align:center;top:288.5px">_25.3-001</div>
<svg style="left:581px;top:224px" width="44" height="56" viewBox="-1 -1 44 56"><path d="M0 0H31L33 4.5H36.5V33L39.5 35.5V47L24 50L10 51.5L0 47Z" fill="url(#gb)"/><path d="M25.5 10H32.8V49.5H25.5Z" fill="#eef2f5"/><path d="M26.8 13.5H31.5M26.8 16.5H31.5M26.8 19.5H30.5M26.8 22.5H31.5" stroke="#b4cadc" stroke-width="0.8"/><path d="M26.3 25H32.3V35.5H26.3Z" fill="url(#gp)"/><path d="M26.8 38.5H31.5M26.8 41.5H31.5M26.8 44.5H30.5" stroke="#d0dce6" stroke-width="0.8"/><path d="M33 32.5L39.5 35.5V47L33 48Z" fill="#f8dc8a"/><path d="M0 0.4L25.5 10V50L10 51.5L0 47Z" fill="url(#gf)"/></svg>
<div class="t gl" style="left:542px;width:120px;text-align:center;top:279.0px">AUTODESK</div>
<svg style="left:649px;top:224px" width="44" height="56" viewBox="-1 -1 44 56"><path d="M0 0H31L33 4.5H36.5V33L39.5 35.5V47L24 50L10 51.5L0 47Z" fill="url(#gb)"/><path d="M25.5 10H32.8V49.5H25.5Z" fill="#eef2f5"/><path d="M26.8 13.5H31.5M26.8 16.5H31.5M26.8 19.5H30.5M26.8 22.5H31.5" stroke="#b4cadc" stroke-width="0.8"/><path d="M26.3 25H32.3V35.5H26.3Z" fill="url(#gp)"/><path d="M26.8 38.5H31.5M26.8 41.5H31.5M26.8 44.5H30.5" stroke="#d0dce6" stroke-width="0.8"/><path d="M33 32.5L39.5 35.5V47L33 48Z" fill="#f8dc8a"/><path d="M0 0.4L25.5 10V50L10 51.5L0 47Z" fill="url(#gf)"/></svg>
<div class="t gl" style="left:610px;width:120px;text-align:center;top:279.0px">CorelDRAW.Grap</div>
<div class="t gl" style="left:610px;width:120px;text-align:center;top:288.5px">hics.Suite.2024.v2</div>
<div class="t gl" style="left:610px;width:120px;text-align:center;top:298.0px">5.0.0.230</div>
<svg style="left:717px;top:224px" width="44" height="56" viewBox="-1 -1 44 56"><path d="M0 0H31L33 4.5H36.5V33L39.5 35.5V47L24 50L10 51.5L0 47Z" fill="url(#gb)"/><path d="M20 6L38 9V50L26 52Z" fill="#f6f6f6"/><path d="M19 5Q29 3 30 14L35 37Q33 44 27 42L21 28Z" fill="#f4c01c"/><path d="M26 16L31 20L27 25Z" fill="#e8702a"/><path d="M6 3.3L27.5 8V51L10.5 51Z" fill="#f1f1f1"/><path d="M6 3.3L27.5 8L26 9L7 5Z" fill="#dcdcdc"/><circle cx="15" cy="25" r="3.8" fill="none" stroke="#b8c6d2" stroke-width="2.6" stroke-dasharray="1.6 1"/><circle cx="20" cy="37" r="3" fill="none" stroke="#b8c6d2" stroke-width="2.2" stroke-dasharray="1.4 0.9"/><path d="M0 0.4L6 3.6L10.5 51.5L10 51.5L0 47Z" fill="url(#gf2)"/></svg>
<div class="t gl" style="left:678px;width:120px;text-align:center;top:279.0px">CYBERDUCK</div>
<svg style="left:785px;top:224px" width="44" height="56" viewBox="-1 -1 44 56"><path d="M0 0H31L33 4.5H36.5V33L39.5 35.5V47L24 50L10 51.5L0 47Z" fill="url(#gb)"/><path d="M25.5 10H32.8V49.5H25.5Z" fill="#eef2f5"/><path d="M26.8 13.5H31.5M26.8 16.5H31.5M26.8 19.5H30.5M26.8 22.5H31.5" stroke="#b4cadc" stroke-width="0.8"/><path d="M26.3 25H32.3V35.5H26.3Z" fill="url(#gp)"/><path d="M26.8 38.5H31.5M26.8 41.5H31.5M26.8 44.5H30.5" stroke="#d0dce6" stroke-width="0.8"/><path d="M33 32.5L39.5 35.5V47L33 48Z" fill="#f8dc8a"/><path d="M0 0.4L25.5 10V50L10 51.5L0 47Z" fill="url(#gf)"/></svg>
<div class="t gl" style="left:746px;width:120px;text-align:center;top:279.0px">FileHistory</div>
<svg style="left:377px;top:316.5px" width="44" height="56" viewBox="-1 -1 44 56"><path d="M0 0H31L33 4.5H36.5V33L39.5 35.5V47L24 50L10 51.5L0 47Z" fill="url(#gb)"/><path d="M20 6L38 9V50L26 52Z" fill="#f4f4f4"/><path d="M30 9L37 16H30Z" fill="#e0e0e0"/><text x="27" y="41" font-size="11" fill="#7fa898" font-family="Liberation Sans">a</text><path d="M6 3.3L20 6L27.5 13V51L10.5 51Z" fill="#f2f2f2"/><path d="M20 6L27.5 13H20Z" fill="#dadada"/><path d="M11.4 20.4H15.5V41H11.4Z" fill="#17854a"/><text x="17" y="42" font-size="11" fill="#6f9a88" font-family="Liberation Sans">a</text><path d="M0 0.4L6 3.6L10.5 51.5L10 51.5L0 47Z" fill="url(#gf2)"/></svg>
<div class="t gl" style="left:338px;width:120px;text-align:center;top:372.5px">https___sicomp.v</div>
<div class="t gl" style="left:338px;width:120px;text-align:center;top:382.0px">n_-Coverage-Dril</div>
<div class="t gl" style="left:338px;width:120px;text-align:center;top:391.5px">ldown-2025-11-2</div>
<div class="t gl" style="left:338px;width:120px;text-align:center;top:401.0px">4</div>
<svg style="left:445px;top:316.5px" width="44" height="56" viewBox="-1 -1 44 56"><path d="M0 0H31L33 4.5H36.5V33L39.5 35.5V47L24 50L10 51.5L0 47Z" fill="url(#gb)"/><path d="M6 3.3L30 7.5V49L11 50Z" fill="#f2f2f2"/><path d="M21 6L38 8.5V46L23 49Z" fill="#f0f0f0"/><path d="M21 6L24 9V49L23 49Z" fill="#d8d8d8"/><path d="M29 12Q36 12 36 18V31Q36 37 29 37Z" fill="#2a6aa8"/><path d="M0 0.4L6 3.6L11 51.5L10 51.5L0 47Z" fill="url(#gf2)"/></svg>
<div class="t gl" style="left:406px;width:120px;text-align:center;top:372.5px">muatool-win32-x</div>
<div class="t gl" style="left:406px;width:120px;text-align:center;top:382.0px">64</div>
<svg style="left:513px;top:316.5px" width="44" height="56" viewBox="-1 -1 44 56"><path d="M0 0H31L33 4.5H36.5V33L39.5 35.5V47L24 50L10 51.5L0 47Z" fill="url(#gb)"/><path d="M7 3.3L39 7V47.5L12 50Z" fill="#f6f6f6"/><circle cx="25" cy="24.5" r="12.5" fill="#0f3460"/><circle cx="25" cy="24.5" r="11" fill="#1b4d86"/><circle cx="28.5" cy="19.5" r="4.3" fill="none" stroke="#ececec" stroke-width="1.8"/><circle cx="19.5" cy="29.5" r="3.3" fill="none" stroke="#ececec" stroke-width="1.6"/><path d="M13 25.5L20 29.5M20 29.5L26 22" stroke="#ececec" stroke-width="1.8"/><path d="M0 0.4L7 3.6L12 51.5L10 51.5L0 47Z" fill="url(#gf2)"/></svg>
<div class="t gl" style="left:474px;width:120px;text-align:center;top:372.5px">New folder</div>
<svg style="left:581px;top:316.5px" width="44" height="56" viewBox="-1 -1 44 56"><path d="M0 0H31L33 4.5H36.5V33L39.5 35.5V47L24 50L10 51.5L0 47Z" fill="url(#gb)"/><path d="M25.5 10H32.8V49.5H25.5Z" fill="#eef2f5"/><path d="M26.8 13.5H31.5M26.8 16.5H31.5M26.8 19.5H30.5M26.8 22.5H31.5" stroke="#b4cadc" stroke-width="0.8"/><path d="M26.3 25H32.3V35.5H26.3Z" fill="url(#gp)"/><path d="M26.8 38.5H31.5M26.8 41.5H31.5M26.8 44.5H30.5" stroke="#d0dce6" stroke-width="0.8"/><path d="M33 32.5L39.5 35.5V47L33 48Z" fill="#f8dc8a"/><path d="M0 0.4L25.5 10V50L10 51.5L0 47Z" fill="url(#gf)"/></svg>
<div class="t gl" style="left:542px;width:120px;text-align:center;top:372.5px">NIKKE</div>
<svg style="left:649px;top:316.5px" width="44" height="56" viewBox="-1 -1 44 56"><path d="M0 0H31L33 4.5H36.5V33L39.5 35.5V47L24 50L10 51.5L0 47Z" fill="url(#gb)"/><path d="M25.5 10H32.8V49.5H25.5Z" fill="#eef2f5"/><path d="M26.8 13.5H31.5M26.8 16.5H31.5M26.8 19.5H30.5M26.8 22.5H31.5" stroke="#b4cadc" stroke-width="0.8"/><path d="M26.3 25H32.3V35.5H26.3Z" fill="url(#gp)"/><path d="M26.8 38.5H31.5M26.8 41.5H31.5M26.8 44.5H30.5" stroke="#d0dce6" stroke-width="0.8"/><path d="M33 32.5L39.5 35.5V47L33 48Z" fill="#f8dc8a"/><path d="M0 0.4L25.5 10V50L10 51.5L0 47Z" fill="url(#gf)"/></svg>
<div class="t gl" style="left:610px;width:120px;text-align:center;top:372.5px">sd_cache</div>
<svg style="left:717px;top:316.5px" width="44" height="56" viewBox="-1 -1 44 56"><path d="M0 0H31L33 4.5H36.5V33L39.5 35.5V47L24 50L10 51.5L0 47Z" fill="url(#gb)"/><path d="M6 3.3L30 7.5V49L11 50Z" fill="#f0f0f0"/><path d="M21 6L38 8.5V46L23 49Z" fill="#f6f6f6"/><path d="M21 6L24 9V49L23 49Z" fill="#d0d0d0"/><path d="M0 0.4L6 3.6L11 51.5L10 51.5L0 47Z" fill="url(#gf2)"/></svg>
<div class="t gl" style="left:678px;width:120px;text-align:center;top:372.5px">Sicomp.Backup.T</div>
<div class="t gl" style="left:678px;width:120px;text-align:center;top:382.0px">ools</div>
<svg style="left:785px;top:316.5px" width="44" height="56" viewBox="-1 -1 44 56"><path d="M0 0H31L33 4.5H36.5V33L39.5 35.5V47L24 50L10 51.5L0 47Z" fill="url(#gb)"/><path d="M20 6L38 9V50L26 52Z" fill="#f6f6f6"/><path d="M30 15H33V45H30Z" fill="none" stroke="#c8c8c8" stroke-width="0.7"/><path d="M6 3.3L27.5 8V51L10.5 51Z" fill="#f1f1f1"/><path d="M6 3.3L27.5 8L26 9L7 5Z" fill="#dcdcdc"/><circle cx="15" cy="26" r="3.8" fill="none" stroke="#b8c2cc" stroke-width="2.6" stroke-dasharray="1.6 1"/><circle cx="19.5" cy="37" r="3.2" fill="none" stroke="#b8c2cc" stroke-width="2.2" stroke-dasharray="1.4 0.9"/><path d="M0 0.4L6 3.6L10.5 51.5L10 51.5L0 47Z" fill="url(#gf2)"/></svg>
<div class="t gl" style="left:746px;width:120px;text-align:center;top:372.5px">SteamLibrary</div>
<svg style="left:377px;top:419.7px" width="44" height="56" viewBox="-1 -1 44 56"><path d="M0 0H31L33 4.5H36.5V33L39.5 35.5V47L24 50L10 51.5L0 47Z" fill="url(#gb)"/><path d="M6 3.3L37 7.5V49L11 50Z" fill="#f2f2f2"/><path d="M13 11H34M13 15H34" stroke="#b0c8b0" stroke-width="1"/><rect x="13" y="17" width="5" height="3" fill="#6a9a6a"/><rect x="20" y="17" width="5" height="3" fill="#6a9a6a"/><rect x="27" y="17" width="5" height="3" fill="#6a9a6a"/><path d="M0 0.4L6 3.6L11 51.5L10 51.5L0 47Z" fill="url(#gf2)"/></svg>
<svg style="left:445px;top:419.7px" width="44" height="56" viewBox="-1 -1 44 56"><path d="M0 0H31L33 4.5H36.5V33L39.5 35.5V47L24 50L10 51.5L0 47Z" fill="url(#gb)"/><path d="M25.5 10H32.8V49.5H25.5Z" fill="#eef2f5"/><path d="M26.8 13.5H31.5M26.8 16.5H31.5M26.8 19.5H30.5M26.8 22.5H31.5" stroke="#b4cadc" stroke-width="0.8"/><path d="M26.3 25H32.3V35.5H26.3Z" fill="url(#gp)"/><path d="M26.8 38.5H31.5M26.8 41.5H31.5M26.8 44.5H30.5" stroke="#d0dce6" stroke-width="0.8"/><path d="M33 32.5L39.5 35.5V47L33 48Z" fill="#f8dc8a"/><path d="M0 0.4L25.5 10V50L10 51.5L0 47Z" fill="url(#gf)"/></svg>
<svg style="left:513px;top:419.7px" width="44" height="56" viewBox="-1 -1 44 56"><path d="M0 0H31L33 4.5H36.5V33L39.5 35.5V47L24 50L10 51.5L0 47Z" fill="url(#gb)"/><path d="M25.5 10H32.8V49.5H25.5Z" fill="#eef2f5"/><path d="M26.8 13.5H31.5M26.8 16.5H31.5M26.8 19.5H30.5M26.8 22.5H31.5" stroke="#b4cadc" stroke-width="0.8"/><path d="M26.3 25H32.3V35.5H26.3Z" fill="url(#gp)"/><path d="M26.8 38.5H31.5M26.8 41.5H31.5M26.8 44.5H30.5" stroke="#d0dce6" stroke-width="0.8"/><path d="M33 32.5L39.5 35.5V47L33 48Z" fill="#f8dc8a"/><path d="M0 0.4L25.5 10V50L10 51.5L0 47Z" fill="url(#gf)"/></svg>
<!--/GRID-->
</div></div>
<div class="a" style="left:354px;top:213px;width:1px;height:228px;background:#232323"></div>
<svg style="left:346px;top:217px" width="6" height="4"><path d="M0.5 3.5L3 1L5.5 3.5" stroke="#9a9a9a" stroke-width="1" fill="none"/></svg>
<div class="a" style="left:344.5px;top:296px;width:8px;height:102px;background:#4d4d4d"></div>
<svg style="left:346px;top:434px" width="6" height="4"><path d="M0.5 0.5L3 3L5.5 0.5" stroke="#9a9a9a" stroke-width="1" fill="none"/></svg>
<!-- content scrollbar -->
<svg style="left:845px;top:217px" width="6" height="4"><path d="M0.5 3.5L3 1L5.5 3.5" stroke="#9a9a9a" stroke-width="1" fill="none"/></svg>
<div class="a" style="left:843px;top:224px;width:9px;height:160px;background:#4d4d4d"></div>
<svg style="left:845px;top:434px" width="6" height="4"><path d="M0.5 0.5L3 3L5.5 0.5" stroke="#9a9a9a" stroke-width="1" fill="none"/></svg>
<!-- bottom panel -->
<div class="a" style="left:255px;top:441px;width:598px;height:48px;background:#393939"></div>
<div class="t" style="left:337px;top:449.5px;color:#e8e8e8;font-size:7.3px">Folder:</div>
<div class="a" style="left:363px;top:447px;width:480px;height:15px;border:1px solid #7a7a7a;background:#3a3a3a"></div>
<div class="t" style="left:367px;top:449.5px;color:#f0f0f0;font-size:7.1px">KY LUA SON LA PRO VIP 123 (D:)</div>
<div class="a" style="left:711px;top:465px;width:68px;height:16px;border:1.5px solid #c8c8c8;background:#424242"></div>
<div class="t" style="left:723.5px;top:468px;color:#f0f0f0;font-size:7.2px">Select Folder</div>
<div class="a" style="left:786px;top:465px;width:57px;height:16px;border:1.5px solid #c8c8c8;background:#2a2a2a"></div>
<div class="t" style="left:803.5px;top:468px;color:#f0f0f0;font-size:7.2px">Cancel</div>
<svg style="left:846px;top:482px" width="6" height="6"><rect x="4" y="0" width="1.2" height="1.2" fill="#999"/><rect x="2" y="2" width="1.2" height="1.2" fill="#999"/><rect x="4" y="2" width="1.2" height="1.2" fill="#999"/><rect x="0" y="4" width="1.2" height="1.2" fill="#999"/><rect x="2" y="4" width="1.2" height="1.2" fill="#999"/><rect x="4" y="4" width="1.2" height="1.2" fill="#999"/></svg>
</body></html>
